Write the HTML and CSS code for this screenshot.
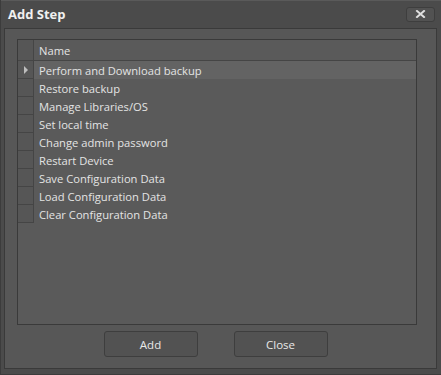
FILE: index.html
```html
<!DOCTYPE html>
<html>
<head>
<meta charset="utf-8">
<link rel="stylesheet" href="styles.css">
</head>
<body>
<div class="window">
  <div class="titlebar">
    <span class="title">Add Step</span>
    <button class="close-btn" aria-label="Close">
      <svg width="11" height="8" viewBox="0 0 11 8"><path d="M2 1 L9 7 M9 1 L2 7" stroke="#e0e0e0" stroke-width="2" stroke-linecap="square"/></svg>
    </button>
  </div>
  <div class="panel">
    <div class="grid">
      <div class="row header"><div class="ind"></div><div class="cell">Name</div></div>
      <div class="row selected"><div class="ind"><span class="arrow"></span></div><div class="cell">Perform and Download backup</div></div>
      <div class="row"><div class="ind"></div><div class="cell">Restore backup</div></div>
      <div class="row"><div class="ind"></div><div class="cell">Manage Libraries/OS</div></div>
      <div class="row"><div class="ind"></div><div class="cell">Set local time</div></div>
      <div class="row"><div class="ind"></div><div class="cell">Change admin password</div></div>
      <div class="row"><div class="ind"></div><div class="cell">Restart Device</div></div>
      <div class="row"><div class="ind"></div><div class="cell">Save Configuration Data</div></div>
      <div class="row"><div class="ind"></div><div class="cell">Load Configuration Data</div></div>
      <div class="row"><div class="ind"></div><div class="cell">Clear Configuration Data</div></div>
    </div>
    <div class="buttons">
      <button class="btn">Add</button>
      <button class="btn">Close</button>
    </div>
  </div>
</div>
</body>
</html>
```
FILE: styles.css
```css
html, body {
  margin: 0;
  padding: 0;
  background: #4a4a4a;
}
.window {
  width: 441px;
  height: 375px;
  box-sizing: border-box;
  background: #4b4b4b;
  border-left: 1px solid #3c3c3c;
  border-bottom: 1px solid #3c3c3c;
  display: flex;
  flex-direction: column;
  font-family: "Open Sans", "Noto Sans", sans-serif;
  color: #e4e4e4;
}
.titlebar {
  height: 28px;
  display: flex;
  align-items: center;
  justify-content: space-between;
  padding: 0 6px 0 7px;
  box-sizing: border-box;
  border-top: 1px solid #5a5a5a;
}
.title {
  font-weight: bold;
  font-size: 13px;
  color: #f0f0f0;
  margin-top: -1px;
}
.close-btn {
  width: 29px;
  height: 15px;
  margin-top: -1px;
  padding: 0;
  border: 1px solid #3e3e3e;
  border-radius: 3px;
  background: #525252;
  display: flex;
  align-items: center;
  justify-content: center;
}
.panel {
  margin: 0 4px 5px 3px;
  flex: 1;
  border: 1px solid #3a3a3a;
  background: #575757;
  display: flex;
  flex-direction: column;
}
.grid {
  margin: 10px 19px 0 12px;
  height: 286px;
  box-sizing: border-box;
  border: 1px solid #3a3a3a;
  background: #5a5a5a;
  font-size: 11.2px;
}
.row {
  display: flex;
  height: 18px;
}
.row.header {
  height: 21px;
}
.ind {
  border-right: 1px solid #454545;
  border-bottom: 1px solid #454545;
  box-sizing: border-box;
  width: 16px;
  background: #565656;
  display: flex;
  align-items: center;
  justify-content: center;
}
.header .ind, .header .cell {
  border-bottom: 1px solid #454545;
}
.cell {
  flex: 1;
  padding-left: 5px;
  display: flex;
  align-items: center;
  box-sizing: border-box;
}
.selected .cell {
  background: #636363;
}
.arrow {
  width: 0;
  height: 0;
  border-top: 4px solid transparent;
  border-bottom: 4px solid transparent;
  border-left: 4px solid #bdbdbd;
}
.buttons {
  display: flex;
  justify-content: center;
  gap: 36px;
  margin-top: 6px;
  padding-right: 10px;
}
.btn {
  width: 94px;
  height: 26px;
  border: 1px solid #3e3e3e;
  border-radius: 3px;
  background: #525252;
  color: #e8e8e8;
  font-family: "Open Sans", "Noto Sans", sans-serif;
  font-size: 11.5px;
  padding: 0;
}
```
